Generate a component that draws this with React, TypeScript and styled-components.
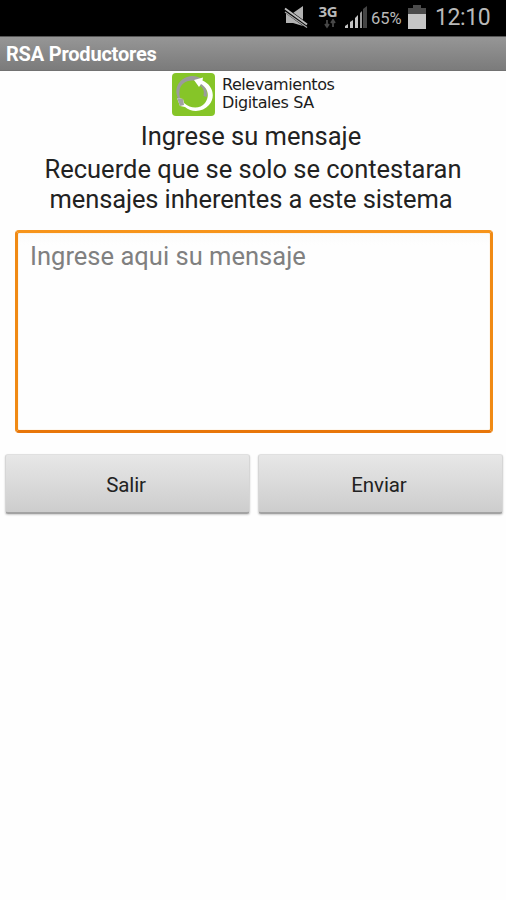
import React from "react";
import styled, { createGlobalStyle } from "styled-components";

const GlobalStyle = createGlobalStyle`
  * { box-sizing: border-box; }
  body { margin: 0; background: #fefefe; font-family: Roboto, sans-serif; }
`;

const Screen = styled.div`
  width: 506px;
  height: 900px;
  overflow: hidden;
  background: #fefefe;
`;

const StatusBar = styled.header`
  height: 36px;
  display: flex;
  justify-content: flex-end;
  background: #000;
  color: #b9b9b9;
`;

const StatusIcons = styled.svg`
  width: 32px;
  height: 36px;
  flex: none;
`;

const Network = styled.div`
  width: 27px;
  padding: 4px 3px 0 0;
  display: flex;
  flex-direction: column;
  align-items: center;
  font: 700 15px/15px "Open Sans", sans-serif;
  letter-spacing: -0.2px;
`;

const Arrows = styled.svg`
  width: 14px;
  height: 10px;
  margin: 0 0 0 3px;
`;

const Signal = styled.svg`
  width: 27px;
  height: 36px;
`;

const Percent = styled.span`
  width: 37px;
  padding-left: 1px;
  font-size: 16.5px;
  line-height: 37px;
`;

const Battery = styled.svg`
  width: 28px;
  height: 36px;
`;

const Clock = styled.time`
  width: 71px;
  font-size: 23px;
  line-height: 36px;
  letter-spacing: -0.4px;
`;

const TitleBar = styled.div`
  height: 35px;
  padding-left: 6px;
  background: linear-gradient(#969696, #7b7b7b);
  border-top: 1px solid #555;
  border-bottom: 1px solid #727272;
  color: #fff;
  font-weight: 700;
  font-size: 20px;
  line-height: 34px;
  letter-spacing: -0.2px;
`;

const Brand = styled.div`
  height: 50px;
  padding: 2px 0 0 172px;
  display: flex;
`;

const Logo = styled.svg`
  width: 43px;
  height: 43px;
  margin-right: 7px;
`;

const BrandName = styled.div`
  padding-top: 3px;
  font: 16px/18px "DejaVu Sans", sans-serif;
  color: #1c1c1c;
  white-space: nowrap;
`;

const BrandLine = styled.div<{ $spacing: string }>`
  letter-spacing: ${(p) => p.$spacing};
`;

const Message = styled.p<{ $gap?: number; $shift?: number; $spacing?: string }>`
  margin: 0 0 ${(p) => p.$gap ?? 0}px;
  padding-right: ${(p) => p.$shift ?? 4}px;
  text-align: center;
  white-space: nowrap;
  color: #222;
  font-size: 25.5px;
  line-height: 30px;
  letter-spacing: ${(p) => p.$spacing ?? "0"};
`;

const MessageBox = styled.textarea`
  display: block;
  width: 478px;
  height: 203px;
  margin: 16px 0 0 15px;
  padding: 8px 12px;
  resize: none;
  outline: none;
  border: 3px solid;
  border-color: #f7941a #f08a14 #e8760a #f08a14;
  border-radius: 4px;
  background: linear-gradient(#fbfbfb, #fefefe 12px);
  box-shadow: inset 0 0 1px #f7b35c;
  font: 25.5px/30px Roboto, sans-serif;
  letter-spacing: 0.02px;
  color: #222;
  &::placeholder { color: #808080; opacity: 1; }
`;

const Actions = styled.div`
  display: grid;
  grid-template-columns: 245px 245px;
  column-gap: 8px;
  padding: 21px 0 0 5px;
`;

const Button = styled.button`
  height: 60px;
  padding: 3px 3px 0 0;
  border: 1px solid #d6d6d6;
  border-top-color: #e0e0e0;
  border-bottom: 2px solid #a3a3a3;
  border-radius: 3px;
  background: linear-gradient(#e7e7e7, #cdcdcd);
  box-shadow: 0 1px 2px #ccc;
  color: #222;
  font: 20.5px/24px Roboto, sans-serif;
  letter-spacing: -0.1px;
`;

export default function App() {
  return (
    <Screen>
      <GlobalStyle />
      <StatusBar>
        <StatusIcons viewBox="0 0 32 36">
          <path d="M2 13h7l10-7v20l-10-3H2z" fill="#b2b2b2" />
          <path d="M0 9l24 17.5" stroke="#000" strokeWidth="5" />
          <path d="M1 8.5l22 16" stroke="#bbb" strokeWidth="2" />
          <path d="M1 12l22 15.5" stroke="#aaa" strokeWidth="1.2" />
        </StatusIcons>
        <Network>
          3G
          <Arrows viewBox="0 0 14 10">
            <path d="M4 1v7M2 5l2 3 2-3M10 8V1M8 4l2-3 2 3" fill="none" stroke="#484848" strokeWidth="1.8" />
          </Arrows>
        </Network>
        <Signal viewBox="0 0 27 36">
          <path d="M2 28v-2l3-2v4zM7 28v-6l3-2v8zM12 28V18l3-3v13z" fill="#c4c4c4" />
          <path d="M17 28V13l2-2v17z" fill="#999" />
          <path d="M20 28V9l4-3v22z" fill="#444" />
        </Signal>
        <Percent>65%</Percent>
        <Battery viewBox="0 0 28 36">
          <path d="M1 8h5V5h8v3h5v21H1z" fill="#4b4b4b" />
          <path d="M1 14h18v15H1z" fill="#c5c5c5" />
        </Battery>
        <Clock>12:10</Clock>
      </StatusBar>
      <TitleBar>RSA Productores</TitleBar>
      <Brand>
        <Logo viewBox="0 0 43 43">
          <rect width="43" height="43" rx="4" fill="#86c528" />
          <path d="M7 27C1 17 6 6 17 3.5c5-1 9 0 12 2L24 8C15 6 8 11 7.5 18c-.5 4 .5 7 2 10z" fill="#9b9b9b" />
          <path d="M29 10c5 4 7 9 5.500 14l-3-1c1-5 0-8-4-11z" fill="#9b9b9b" />
          <path d="M22 7l9-2.500-.5 3C41 12 44 24 37 32c-6 7-17 8-24 2l-5-1-3-8 6 1 1 4c7 6 16 6 21 0 5-7 3-15-4-19l-2 3z" fill="#fff" />
          <path d="M5 25l6 1 1 6-4 1z" fill="#a2a2a2" />
        </Logo>
        <BrandName>
          <BrandLine $spacing="-0.45px">Relevamientos</BrandLine>
          <BrandLine $spacing="-0.4px">Digitales SA</BrandLine>
        </BrandName>
      </Brand>
      <Message $gap={3}>Ingrese su mensaje</Message>
      <Message $shift={0} $spacing="-0.01px">Recuerde que se solo se contestaran</Message>
      <Message $spacing="-0.12px">mensajes inherentes a este sistema</Message>
      <MessageBox placeholder="Ingrese aqui su mensaje" />
      <Actions>
        <Button>Salir</Button>
        <Button>Enviar</Button>
      </Actions>
    </Screen>
  );
}
